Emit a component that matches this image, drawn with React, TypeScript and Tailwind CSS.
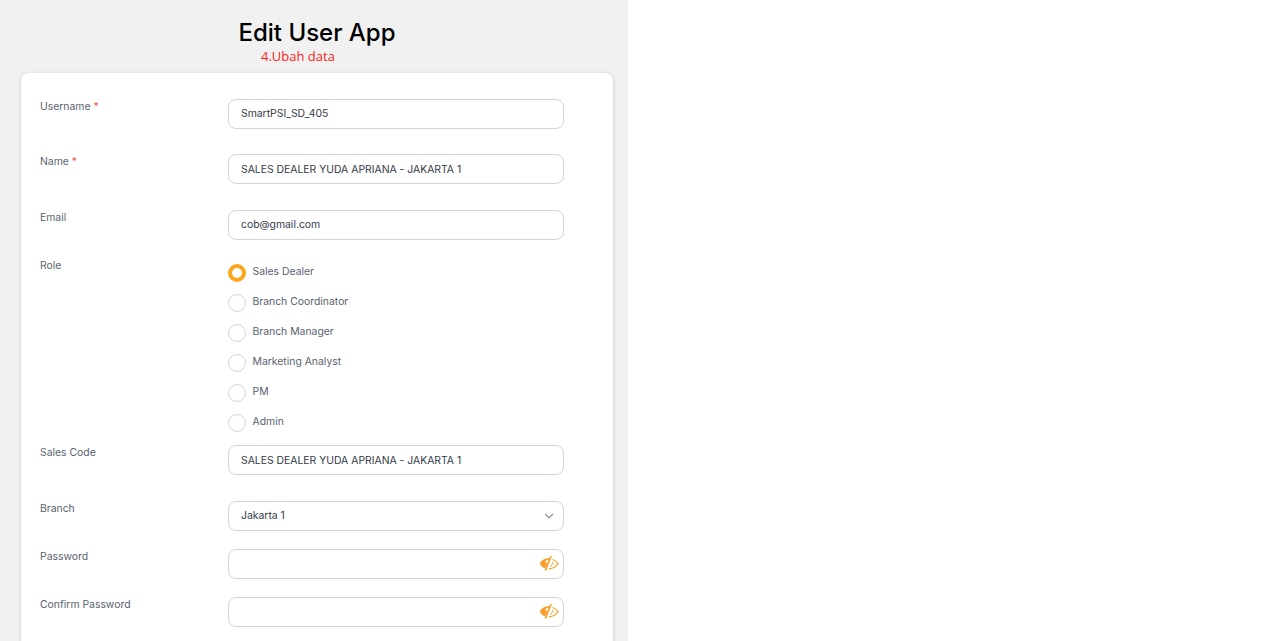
const labelCls = "text-[10.4px] leading-[14px] text-[#5a6270]";
const inputCls = "h-[30px] w-[336px] shrink-0 rounded-[8px] border border-[#d1d5db] bg-white flex items-center pl-[12px] pr-[9px] text-[10.4px] text-[#343b48]";

function EyeOff() {
  return (
    <svg width="20" height="17" viewBox="0 0 20 17" fill="none">
      <path d="M0.6 8.6C2.8 5.2 6 3.2 9.6 3.1L10.8 3.3L6 13.6C3.8 12.9 2.2 11 0.6 8.6Z" fill="#fb9f2c" />
      <path d="M6.6 6.6C7 5.4 8 4.8 9.2 4.8L7.8 8.2C7.2 8 6.7 7.4 6.6 6.6Z" fill="#fff" />
      <path d="M12.2 1L6.4 15.6" stroke="#fb9f2c" strokeWidth="1.5" />
      <path d="M13.4 4.4C15.8 5.2 17.6 6.6 19.2 8.6C17.2 11.6 14 13.8 9.6 13.8" stroke="#fb9f2c" strokeWidth="1.1" />
      <path d="M13.4 7C14 9 13 11 10.8 11.6" stroke="#fb9f2c" strokeWidth="1" />
    </svg>
  );
}

function Field({ label, req, value, h, up, children }: { label: string; req?: boolean; value?: string; h: string; up?: boolean; children?: React.ReactNode }) {
  return (
    <div className={`flex ${h}`}>
      <div className={`w-[188px] shrink-0 pt-[1px] ${labelCls}`}>
        {label}
        {req && <span className="text-[#ef5350]"> *</span>}
      </div>
      {children ?? <div className={`${inputCls} ${up ? "pb-[1px]" : "pt-[1px]"}`}>{value}</div>}
    </div>
  );
}

const roles = ["Branch Coordinator", "Branch Manager", "Marketing Analyst", "PM", "Admin"];

export default function App() {
  return (
    <div className="h-[641px] w-[1285px] overflow-hidden bg-white font-['Inter',sans-serif]">
      <div className="h-[641px] w-[628px] bg-[#f1f1f1] pl-[21px] pr-[15px]">
        <div className="h-[73px] relative">
          <h1 className="pt-[17px] text-center text-[24px] leading-[32px] font-medium text-black">Edit User App</h1>
          <div className="absolute left-[240px] top-[48px] text-[13px] leading-[17px] text-[#ff1a1a] font-['Open_Sans',sans-serif]">4.Ubah data</div>
        </div>
        <div className="h-[600px] rounded-[8px] bg-white shadow-[0_1px_4px_rgba(0,0,0,0.18)] pl-[19px] pt-[26px]">
          <Field label="Username" req value="SmartPSI_SD_405" h="h-[55px]" up />
          <Field label="Name" req value="SALES DEALER YUDA APRIANA - JAKARTA 1" h="h-[56px]" />
          <Field label="Email" value="cob@gmail.com" h="h-[48px]" up />
          <Field label="Role" h="h-[187px]">
            <div className="flex flex-col pt-[6px]">
              <label className={`flex h-[30px] items-start gap-[6.5px] ${labelCls}`}>
                <span className="h-[18px] w-[18px] rounded-full border-[4px] border-[#fba61e] bg-white" />
                <span className="pt-[1px]">Sales Dealer</span>
              </label>
              {roles.map((r) => (
                <label key={r} className={`flex h-[30px] items-start gap-[6.5px] ${labelCls}`}>
                  <span className="h-[18px] w-[18px] rounded-full border border-[#d1d5db] bg-white" />
                  <span className="pt-[1px]">{r}</span>
                </label>
              ))}
            </div>
          </Field>
          <Field label="Sales Code" value="SALES DEALER YUDA APRIANA - JAKARTA 1" h="h-[56px]" />
          <Field label="Branch" h="h-[48px]">
            <div className={`${inputCls} justify-between pb-[1px]`}>
              <span>Jakarta 1</span>
              <svg width="10" height="6" viewBox="0 0 10 6" fill="none"><path d="M1 1l4 4 4-4" stroke="#8a909a" strokeWidth="1.2" /></svg>
            </div>
          </Field>
          <Field label="Password" h="h-[48px]">
            <div className={`${inputCls} justify-end !pr-[4px] pb-[2px]`}><EyeOff /></div>
          </Field>
          <Field label="Confirm Password" h="h-[48px]">
            <div className={`${inputCls} justify-end !pr-[4px] pb-[2px]`}><EyeOff /></div>
          </Field>
        </div>
      </div>
    </div>
  );
}
